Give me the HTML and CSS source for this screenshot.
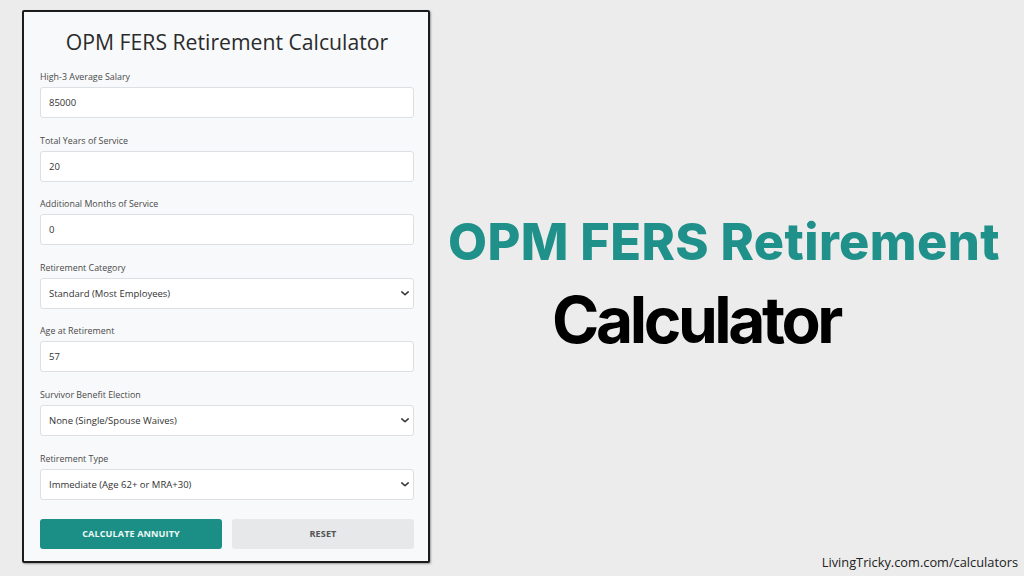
FILE: index.html
```html
<!DOCTYPE html>
<html lang="en">
<head>
<meta charset="utf-8">
<title>OPM FERS Retirement Calculator</title>
<link rel="stylesheet" href="styles.css">
</head>
<body>
<div class="page">
  <div class="card">
    <h1 class="card-title">OPM FERS Retirement Calculator</h1>
    <div class="fields">
      <div class="field">
        <label class="label">High-3 Average Salary</label>
        <input class="control" type="text" value="85000">
      </div>
      <div class="field">
        <label class="label">Total Years of Service</label>
        <input class="control" type="text" value="20">
      </div>
      <div class="field">
        <label class="label">Additional Months of Service</label>
        <input class="control" type="text" value="0">
      </div>
      <div class="field">
        <label class="label">Retirement Category</label>
        <div class="select-wrap">
          <select class="control select"><option>Standard (Most Employees)</option></select>
          <svg class="chev" viewBox="0 0 10 6" width="10" height="6"><path d="M1 1 L5 4.6 L9 1" fill="none" stroke="#333" stroke-width="1.9" stroke-linecap="round" stroke-linejoin="round"/></svg>
        </div>
      </div>
      <div class="field">
        <label class="label">Age at Retirement</label>
        <input class="control" type="text" value="57">
      </div>
      <div class="field">
        <label class="label">Survivor Benefit Election</label>
        <div class="select-wrap">
          <select class="control select"><option>None (Single/Spouse Waives)</option></select>
          <svg class="chev" viewBox="0 0 10 6" width="10" height="6"><path d="M1 1 L5 4.6 L9 1" fill="none" stroke="#333" stroke-width="1.9" stroke-linecap="round" stroke-linejoin="round"/></svg>
        </div>
      </div>
      <div class="field">
        <label class="label">Retirement Type</label>
        <div class="select-wrap">
          <select class="control select"><option>Immediate (Age 62+ or MRA+30)</option></select>
          <svg class="chev" viewBox="0 0 10 6" width="10" height="6"><path d="M1 1 L5 4.6 L9 1" fill="none" stroke="#333" stroke-width="1.9" stroke-linecap="round" stroke-linejoin="round"/></svg>
        </div>
      </div>
    </div>
    <div class="buttons">
      <button class="btn btn-primary">CALCULATE ANNUITY</button>
      <button class="btn btn-secondary">RESET</button>
    </div>
  </div>
  <div class="hero">
    <div class="hero-line1">OPM FERS Retirement</div>
    <div class="hero-line2">Calculator</div>
  </div>
</div>
<div class="footer">LivingTricky.com.com/calculators</div>
</body>
</html>
```

FILE: styles.css
```css
* { box-sizing: border-box; }
html, body {
  margin: 0;
  padding: 0;
  width: 1024px;
  height: 576px;
  overflow: hidden;
  background: #ececec;
  font-family: "Open Sans", "Liberation Sans", sans-serif;
}
.page {
  display: flex;
  align-items: flex-start;
  padding: 10px 0 0 22px;
}
.card {
  width: 408px;
  height: 553px;
  background: #f8f9fa;
  border: 2px solid #1c1c1c;
  border-radius: 2px;
  box-shadow: 1px 1px 2px rgba(0,0,0,0.35);
  padding: 15px 14px 12px 16px;
  display: flex;
  flex-direction: column;
}
.card-title {
  margin: 0 0 13px;
  font-size: 21.2px;
  line-height: 30px;
  font-weight: 500;
  color: #2b2b2b;
  text-align: center;
}
.fields {
  display: flex;
  flex-direction: column;
  gap: 15.6px;
}
.field {
  display: flex;
  flex-direction: column;
}
.label {
  font-size: 8.9px;
  line-height: 13px;
  color: #4a4a4a;
  margin-bottom: 4px;
}
.control {
  width: 100%;
  height: 31px;
  border: 1px solid #dcdfe3;
  border-radius: 3px;
  background: #fff;
  padding: 0 8px;
  font-family: "Open Sans", "Liberation Sans", sans-serif;
  font-size: 9.5px;
  color: #333;
  outline: none;
}
.select-wrap {
  position: relative;
}
.select {
  appearance: none;
  -webkit-appearance: none;
  display: block;
}
.chev {
  position: absolute;
  right: 5px;
  top: 13px;
  width: 8px;
  height: 5px;
}
.buttons {
  display: flex;
  gap: 10px;
  margin-top: 19px;
}
.btn {
  flex: 1;
  height: 30px;
  border: none;
  border-radius: 3px;
  font-family: "Open Sans", "Liberation Sans", sans-serif;
  font-size: 9.1px;
  font-weight: 700;
  letter-spacing: 0.1px;
}
.btn-primary {
  background: #1b8f86;
  color: #eef8f7;
}
.btn-secondary {
  background: #e6e8ea;
  color: #555;
}
.hero {
  flex: 1;
  display: flex;
  flex-direction: column;
  align-items: center;
  padding-top: 196px;
}
.hero-line1 {
  font-family: "Inter", "Liberation Sans", sans-serif;
  font-weight: 800;
  font-size: 50.5px;
  line-height: 72px;
  color: #20918a;
  letter-spacing: 0.4px;
  margin-left: -6px;
}
.hero-line2 {
  font-family: "Inter", "Liberation Sans", sans-serif;
  font-weight: 700;
  font-size: 64px;
  line-height: 76px;
  color: #000;
  margin-top: 4px;
  margin-right: 62px;
  letter-spacing: -3.4px;
}
.footer {
  position: absolute;
  right: 6px;
  top: 553px;
  font-size: 12.8px;
  color: #222;
  line-height: 18px;
}
```
